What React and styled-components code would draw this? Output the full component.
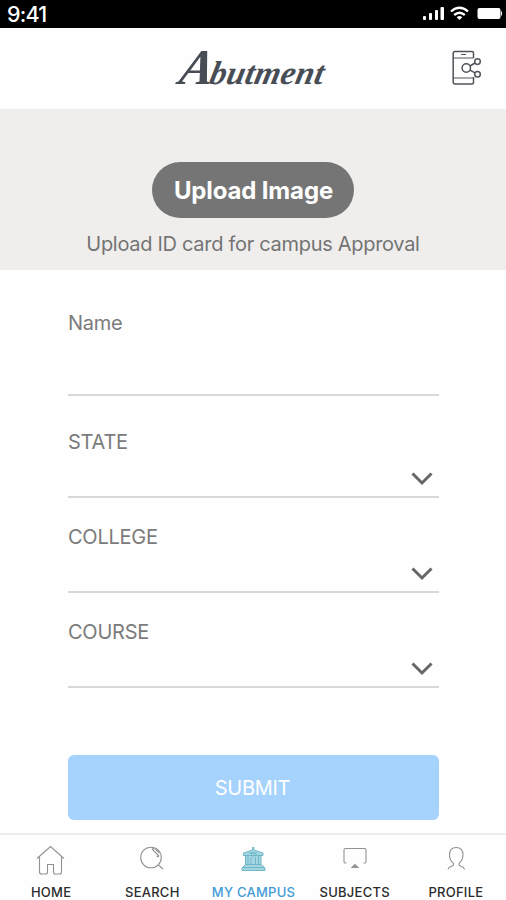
import { useState } from "react";
import styled, { createGlobalStyle } from "styled-components";

const GlobalStyle = createGlobalStyle`
  * {
    box-sizing: border-box;
  }

  body {
    margin: 0;
    background: #fefefe;
    font-family: Inter, "Liberation Sans", sans-serif;
  }

  button,
  input {
    font-family: inherit;
  }
`;

const Screen = styled.div`
  width: 506px;
  height: 900px;
  display: flex;
  flex-direction: column;
  overflow: hidden;
`;

const StatusBar = styled.div`
  height: 28px;
  flex: none;
  display: flex;
  align-items: center;
  justify-content: space-between;
  padding: 0 4px 0 7px;
  background: #000;
  color: #fff;
`;

const Clock = styled.span`
  font-size: 21.5px;
  line-height: 28px;
  font-weight: 500;
  letter-spacing: -0.8px;
`;

const Header = styled.header`
  height: 81px;
  flex: none;
  display: grid;
  grid-template-columns: 1fr auto 1fr;
  align-items: center;
  padding: 0 24px;
`;

const Logo = styled.h1`
  grid-column: 2;
  margin: 0;
  padding-top: 2px;
  color: #484d55;
  font: italic bold 33px/40px "Liberation Serif", cursive;
  letter-spacing: 0.3px;
  transform: skewX(-12deg);

  &::first-letter {
    font-size: 50px;
    letter-spacing: -3px;
  }
`;

const ShareButton = styled.button`
  justify-self: end;
  display: flex;
  padding: 0 0 2px;
  border: 0;
  background: none;
  color: #50545a;
`;

const UploadPanel = styled.section`
  height: 161px;
  flex: none;
  display: flex;
  flex-direction: column;
  align-items: center;
  padding-top: 53px;
  background: #efeeed;
`;

const UploadButton = styled.button`
  width: 202px;
  height: 56px;
  padding: 1px 0 0 1px;
  border: 0;
  border-radius: 28px;
  background: #757575;
  color: #fff;
  font-size: 24px;
  font-weight: 700;
  letter-spacing: -0.15px;
`;

const UploadHint = styled.p`
  margin: 14px 0 0;
  color: #747474;
  font-size: 20px;
  line-height: 24px;
  letter-spacing: -0.3px;
  white-space: nowrap;
`;

const Form = styled.form`
  flex: 1;
  display: flex;
  flex-direction: column;
  padding: 41px 67px 0 68px;
`;

const Field = styled.label`
  height: ${(p) => p.$height}px;
  flex: none;
  display: flex;
  flex-direction: column;
  justify-content: space-between;
  margin-bottom: ${(p) => p.$gap}px;
  border-bottom: 2px solid #d8d8d8;
`;

const Label = styled.span`
  color: #7b7b7b;
  font-size: 20px;
  line-height: 24px;
  letter-spacing: -0.25px;
`;

const NameInput = styled.input`
  width: 100%;
  height: 40px;
  padding: 0;
  border: 0;
  outline: 0;
  background: none;
  font-size: 20px;
`;

const SelectRow = styled.span`
  display: flex;
  justify-content: flex-end;
  padding: 0 6px 10px 0;
  color: #666;
`;

const SubmitButton = styled.button`
  height: 65px;
  flex: none;
  padding: 0 2px 0 0;
  border: 0;
  border-radius: 6px;
  background: #a5d3fd;
  color: #fff;
  font-size: 20px;
  letter-spacing: -0.3px;
`;

const TabBar = styled.nav`
  height: 67px;
  flex: none;
  display: grid;
  grid-template-columns: repeat(5, 1fr);
  border-top: 2px solid #ededed;
`;

const Tab = styled.button`
  display: flex;
  flex-direction: column;
  align-items: center;
  padding: 9px 0 0 1px;
  border: 0;
  background: none;
  color: ${(p) => (p.$active ? "#429bd6" : "#2c2c2c")};
  font-size: 13px;
  font-weight: 500;
  line-height: 16px;
  letter-spacing: 0.25px;
  white-space: nowrap;

  svg {
    margin-bottom: 8px;
  }
`;

const SignalIcon = () => (
  <svg width="80" height="28" viewBox="0 0 80 28" fill="#fff">
    <rect x="1" y="16" width="3" height="4" rx="1" />
    <rect x="7" y="13" width="3" height="7" rx="1" />
    <rect x="13" y="10" width="3" height="10" rx="1" />
    <rect x="18.5" y="7" width="3.5" height="13" rx="1" />
    <g fill="none" stroke="#fff" strokeWidth="2.3">
      <path d="M29 11.5Q37.5 4 46 11.5" />
      <path d="M32.2 15Q37.5 10.5 42.8 15" />
    </g>
    <path d="M34.7 17.2Q37.5 15 40.3 17.2L37.5 20Z" />
    <rect x="55.5" y="8" width="23" height="11" rx="2" />
    <rect x="79" y="11.5" width="1" height="4" />
  </svg>
);

const SharePhoneIcon = () => (
  <svg
    width="31"
    height="36"
    viewBox="0 0 31 36"
    fill="none"
    stroke="currentColor"
    strokeWidth="1.5"
  >
    <path d="M22.5 8V3Q22.5 1.5 21 1.5H4Q2.2 1.5 2.2 3.5V32Q2.2 34 4 34H21Q22.5 34 22.5 32.5V27" />
    <path d="M2.5 8H22.5M2.5 28H22.5M10 4.5H15" strokeWidth="1.2" />
    <circle cx="15.3" cy="18" r="4.2" />
    <circle cx="26.5" cy="11.6" r="2.8" />
    <circle cx="26.5" cy="24.2" r="2.8" />
    <path d="M19 16L24 13M19 20.2L24 22.8" />
  </svg>
);

const Chevron = () => (
  <svg width="22" height="14" viewBox="0 0 22 14" fill="none">
    <path d="M1.5 1.5L11 11L20.5 1.5" stroke="currentColor" strokeWidth="3" />
  </svg>
);

const tabIcons = {
  home: (
    <path d="M2 14.5L15.5 2.5L29 14.5M4.5 12.5V28Q4.5 30 6.5 30H10.5Q12.5 30 12.5 28V20.5H18.5V28Q18.5 30 20.5 30H24.5Q26.5 30 26.5 28V12.5" />
  ),
  search: (
    <>
      <circle cx="15" cy="13.5" r="10.3" />
      <path d="M22.5 21L27 25M16 5L23 12M19 4.5L23.5 9M16 5.5L18 4M20.5 12L23 13" />
    </>
  ),
  campus: (
    <g stroke="#6fb7c8" strokeWidth="1">
      <path
        d="M15.5 3.5V6L6.5 9V11.5H8.5V20.5L5 24V26.5H28V24L24 20.5V11.5H26V9L17 6V3.5Z"
        fill="#a4d6e1"
      />
      <path d="M8 11.5H25M8 20.5H24M6 23.5H27M11 12V20M14 13V20M18.5 13V20M21.5 12V20M12 9H20" />
      <circle cx="16.3" cy="10.2" r="1.8" />
    </g>
  ),
  subjects: (
    <>
      <path d="M7.5 19H6Q5 19 5 17.5V6Q5 4.5 6.5 4.5H25.5Q27 4.5 27 6V17.5Q27 19 26 19H24.5" />
      <path d="M13 23.5L16 20.5L19 23.5Z" fill="#999" />
    </>
  ),
  profile: (
    <path d="M8 25.5Q8.5 23 11.5 22.2Q14.5 21.5 13 18.8Q9.5 16 9.5 11Q9.5 3.5 16.2 3.5T23 11Q23 16 19.5 18.8Q18 21.5 21 22.2Q24 23 24.5 25.5" />
  ),
};

const TabIcon = ({ name }) => (
  <svg
    width="32"
    height="32"
    viewBox="0 0 32 32"
    fill="none"
    stroke="#929292"
    strokeWidth="1.1"
  >
    {tabIcons[name]}
  </svg>
);

const selects = [
  { label: "STATE", gap: 27 },
  { label: "COLLEGE", gap: 27 },
  { label: "COURSE", gap: 67 },
];

const tabs = [
  { id: "home", label: "HOME" },
  { id: "search", label: "SEARCH" },
  { id: "campus", label: "MY CAMPUS" },
  { id: "subjects", label: "SUBJECTS" },
  { id: "profile", label: "PROFILE" },
];

const App = () => {
  const [name, setName] = useState("");
  const [activeTab, setActiveTab] = useState("campus");

  const onSubmit = (e) => {
    e.preventDefault();
  };

  return (
    <>
      <GlobalStyle />
      <Screen>
        <StatusBar>
          <Clock>9:41</Clock>
          <SignalIcon />
        </StatusBar>

        <Header>
          <Logo>Abutment</Logo>
          <ShareButton aria-label="Share">
            <SharePhoneIcon />
          </ShareButton>
        </Header>

        <UploadPanel>
          <UploadButton>Upload Image</UploadButton>
          <UploadHint>Upload ID card for campus Approval</UploadHint>
        </UploadPanel>

        <Form onSubmit={onSubmit}>
          <Field $height={85} $gap={34}>
            <Label>Name</Label>
            <NameInput value={name} onChange={(e) => setName(e.target.value)} />
          </Field>
          {selects.map(({ label, gap }) => (
            <Field key={label} $height={68} $gap={gap}>
              <Label>{label}</Label>
              <SelectRow>
                <Chevron />
              </SelectRow>
            </Field>
          ))}
          <SubmitButton type="submit">SUBMIT</SubmitButton>
        </Form>

        <TabBar>
          {tabs.map(({ id, label }) => (
            <Tab
              key={id}
              $active={id === activeTab}
              onClick={() => setActiveTab(id)}
            >
              <TabIcon name={id} />
              {label}
            </Tab>
          ))}
        </TabBar>
      </Screen>
    </>
  );
};

export default App;
